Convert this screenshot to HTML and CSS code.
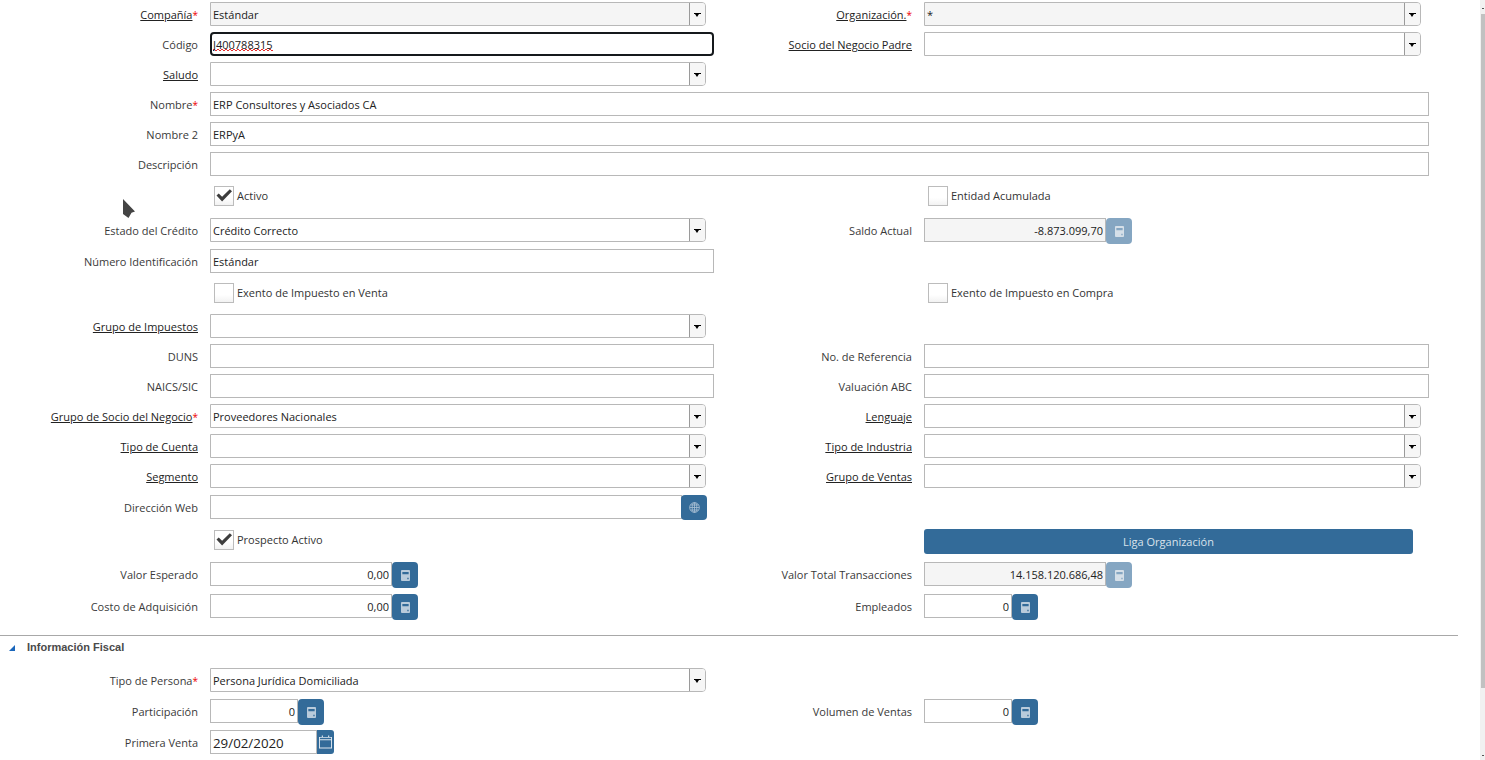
FILE: index.html
```html
<!DOCTYPE html>
<html lang="es">
<head>
<meta charset="utf-8">
<title>Socio del Negocio</title>
<link rel="stylesheet" href="styles.css">
</head>
<body>
<svg class="sprites" width="0" height="0">
  <symbol id="calc" viewBox="0 0 10 12"><path fill-rule="evenodd" d="M1 0h8a1 1 0 0 1 1 1v10a1 1 0 0 1-1 1H1a1 1 0 0 1-1-1V1a1 1 0 0 1 1-1zm.5 2v2.500h7V2zm5.500 6.500v1.700h1.500V8.500z"/></symbol>
  <symbol id="globe" viewBox="0 0 12 12"><g fill="none" stroke="currentColor" stroke-width=".9"><circle cx="6" cy="6" r="5.300"/><ellipse cx="6" cy="6" rx="2.500" ry="5.300"/><path d="M.7 6h10.600M1.500 3.300h9M1.500 8.700h9M6 .7v10.600"/></g></symbol>
  <symbol id="check" viewBox="0 0 20 20"><path d="M2.500 9.500l2.200-2.100 3.400 3.300L15.800 3.200l2.200 2.100-9.900 10.100z"/></symbol>
  <symbol id="cal" viewBox="0 0 14 14"><path fill-rule="evenodd" d="M3 0h1.200v1.500h5.600V0H11v1.500h3V14H0V1.500h3zM1 5v8h12V5zm0-2.500V4h12V2.500z"/></symbol>
</svg>
<div class="window">
<main class="form">
  <div class="row">
    <label class="lbl"><u>Compañía</u><b>*</b></label>
    <div class="combo ro"><input class="inp" value="Estándar" readonly><span class="arrow"></span></div>
    <label class="lbl"><u>Organización.</u><b>*</b></label>
    <div class="combo ro"><input class="inp" value="*" readonly><span class="arrow"></span></div>
  </div>
  <div class="row">
    <label class="lbl">Código</label>
    <input class="inp box focus" value="J400788315">
    <label class="lbl"><u>Socio del Negocio Padre</u></label>
    <div class="combo"><input class="inp"><span class="arrow"></span></div>
  </div>
  <div class="row">
    <label class="lbl"><u>Saludo</u></label>
    <div class="combo"><input class="inp"><span class="arrow"></span></div>
  </div>
  <div class="row">
    <label class="lbl">Nombre<b>*</b></label>
    <input class="inp box full" value="ERP Consultores y Asociados CA">
  </div>
  <div class="row">
    <label class="lbl">Nombre 2</label>
    <input class="inp box full" value="ERPyA">
  </div>
  <div class="row h33">
    <label class="lbl">Descripción</label>
    <input class="inp box full">
  </div>
  <div class="row h33">
    <span></span>
    <label class="chk"><span class="tick"><svg class="ico"><use href="#check"/></svg></span>Activo</label>
    <span></span>
    <label class="chk"><span class="tick"></span>Entidad Acumulada</label>
  </div>
  <div class="row h31">
    <label class="lbl">Estado del Crédito</label>
    <div class="combo"><input class="inp" value="Crédito Correcto"><span class="arrow"></span></div>
    <label class="lbl">Saldo Actual</label>
    <div class="num"><input class="inp box right ro" value="-8.873.099,70" readonly><button class="btn dim"><svg class="ico"><use href="#calc"/></svg></button></div>
  </div>
  <div class="row h33">
    <label class="lbl">Número Identificación</label>
    <input class="inp box" value="Estándar">
  </div>
  <div class="row h32">
    <span></span>
    <label class="chk"><span class="tick"></span>Exento de Impuesto en Venta</label>
    <span></span>
    <label class="chk"><span class="tick"></span>Exento de Impuesto en Compra</label>
  </div>
  <div class="row">
    <label class="lbl"><u>Grupo de Impuestos</u></label>
    <div class="combo"><input class="inp"><span class="arrow"></span></div>
  </div>
  <div class="row">
    <label class="lbl">DUNS</label>
    <input class="inp box">
    <label class="lbl">No. de Referencia</label>
    <input class="inp box">
  </div>
  <div class="row">
    <label class="lbl">NAICS/SIC</label>
    <input class="inp box">
    <label class="lbl">Valuación ABC</label>
    <input class="inp box">
  </div>
  <div class="row">
    <label class="lbl"><u>Grupo de Socio del Negocio</u><b>*</b></label>
    <div class="combo"><input class="inp" value="Proveedores Nacionales"><span class="arrow"></span></div>
    <label class="lbl"><u>Lenguaje</u></label>
    <div class="combo"><input class="inp"><span class="arrow"></span></div>
  </div>
  <div class="row">
    <label class="lbl"><u>Tipo de Cuenta</u></label>
    <div class="combo"><input class="inp"><span class="arrow"></span></div>
    <label class="lbl"><u>Tipo de Industria</u></label>
    <div class="combo"><input class="inp"><span class="arrow"></span></div>
  </div>
  <div class="row h31">
    <label class="lbl"><u>Segmento</u></label>
    <div class="combo"><input class="inp"><span class="arrow"></span></div>
    <label class="lbl"><u>Grupo de Ventas</u></label>
    <div class="combo"><input class="inp"><span class="arrow"></span></div>
  </div>
  <div class="row h34">
    <label class="lbl">Dirección Web</label>
    <div class="num web"><input class="inp box"><button class="btn"><svg class="ico globe"><use href="#globe"/></svg></button></div>
  </div>
  <div class="row h33">
    <span></span>
    <label class="chk"><span class="tick"><svg class="ico"><use href="#check"/></svg></span>Prospecto Activo</label>
    <span></span>
    <button class="liga">Liga Organización</button>
  </div>
  <div class="row h32">
    <label class="lbl">Valor Esperado</label>
    <div class="num"><input class="inp box right" value="0,00"><button class="btn"><svg class="ico"><use href="#calc"/></svg></button></div>
    <label class="lbl">Valor Total Transacciones</label>
    <div class="num"><input class="inp box right ro" value="14.158.120.686,48" readonly><button class="btn dim"><svg class="ico"><use href="#calc"/></svg></button></div>
  </div>
  <div class="row h41">
    <label class="lbl">Costo de Adquisición</label>
    <div class="num"><input class="inp box right" value="0,00"><button class="btn"><svg class="ico"><use href="#calc"/></svg></button></div>
    <label class="lbl">Empleados</label>
    <div class="num short"><input class="inp box right" value="0"><button class="btn"><svg class="ico"><use href="#calc"/></svg></button></div>
  </div>
  <section class="section">
    <h3 class="section-title"><span class="tri"></span>Información Fiscal</h3>
    <div class="row h31">
      <label class="lbl">Tipo de Persona<b>*</b></label>
      <div class="combo"><input class="inp" value="Persona Jurídica Domiciliada"><span class="arrow"></span></div>
    </div>
    <div class="row h31">
      <label class="lbl">Participación</label>
      <div class="num short"><input class="inp box right" value="0"><button class="btn"><svg class="ico"><use href="#calc"/></svg></button></div>
      <label class="lbl">Volumen de Ventas</label>
      <div class="num short"><input class="inp box right" value="0"><button class="btn"><svg class="ico"><use href="#calc"/></svg></button></div>
    </div>
    <div class="row">
      <label class="lbl">Primera Venta</label>
      <div class="date"><input class="inp box datev" value="29/02/2020"><button class="calbtn"><svg class="ico"><use href="#cal"/></svg></button></div>
    </div>
  </section>
</main>
<div class="scrollbar"><i class="up"></i><div class="thumb"></div><i class="down"></i></div>
</div>
<svg class="pointer" width="13" height="20" viewBox="0 0 13 20"><path d="M0 0l12 12.500-3.500 1.200-3 5.300L0 15z"/></svg>
</body>
</html>
```
FILE: styles.css
```css
* { box-sizing: border-box; }
html, body { margin: 0; height: 760px; overflow: hidden; background: #fff; }
body { font: 11px "Open Sans", "Noto Sans", sans-serif; color: #333; }
.sprites { position: absolute; }
.window { display: flex; height: 760px; }
.form { width: 1480px; padding-top: 2px; }
.row { display: grid; grid-template-columns: 198px 504px 186px 505px; column-gap: 12px; height: 30px; align-items: start; }
.h31 { height: 31px; }
.h32 { height: 32px; }
.h33 { height: 33px; }
.h34 { height: 34px; }
.h41 { height: 41px; }
.lbl { height: 24px; line-height: 26px; text-align: right; white-space: nowrap; color: #3a3a3a; }
.lbl u { color: #222; }
.lbl b { color: #ee0000; font-weight: 400; font-size: 10px; }
.inp { font: inherit; color: #222; height: 24px; border: 0; padding: 1px 2px 0 2px; background: transparent; width: 100%; min-width: 0; outline: 0; display: block; }
.box { border: 1px solid #b8b8b8; background: #fff; }
.ro { background: #f5f5f5; }
.focus { border: 2px solid #15191c; border-radius: 4px; padding-left: 1px;
  background:
    repeating-linear-gradient(90deg, #e83030 0 2px, transparent 2px 4px) no-repeat 1px 15px / 60px 1px,
    repeating-linear-gradient(90deg, transparent 0 2px, #e83030 2px 4px) no-repeat 1px 16px / 60px 1px,
    #fff; }
.full { grid-column: 2 / 5; }
.right { text-align: right; }
.combo { display: flex; width: 496px; height: 24px; border: 1px solid #b8b8b8; border-radius: 0 4px 4px 0; }
.row > .combo:nth-child(4) { width: 497px; }
.combo .inp { height: 22px; flex: 1; padding-left: 2px; }
.arrow { width: 16px; border-left: 1px solid #9a9a9a; background: #f6f6f6 linear-gradient(#000, #000) no-repeat 4px 10px / 7px 1px; border-radius: 0 3px 3px 0; position: relative; }
.arrow::after { content: ""; position: absolute; left: 5px; top: 11px; border: 2.500px solid transparent; border-top: 3px solid #000; border-bottom: 0; }
.num { display: flex; width: 208px; }
.num .inp { flex: 1; }
.num.short { width: 114px; }
.num.web { width: 497px; }
.btn { width: 26px; height: 26px; flex: none; margin: 0; padding: 0; border: 0; border-radius: 4px; background: #336b99; color: #b9cbdb; display: flex; align-items: center; justify-content: center; }
.btn.dim { background: #85a6c2; }
.btn.dim .ico { fill: #d5dfe8; }
.web .btn { margin-left: -1px; height: 25px; }
.ico { width: 9px; height: 11px; fill: currentColor; display: block; }
.globe { width: 11px; height: 11px; color: #a9c0d4; }
.chk { display: flex; align-items: center; height: 21px; margin-left: 4px; gap: 3px; white-space: nowrap; line-height: 22px; color: #333; }
.tick { width: 20px; height: 20px; border: 1px solid #bcbcbc; background: linear-gradient(#fff 60%, #f2f2f2); flex: none; }
.tick .ico { width: 20px; height: 20px; margin: -1px; fill: #3d3d3d; }
.liga { width: 489px; height: 25px; border: 0; border-radius: 3px; background: #336b99; color: #d9e3ec; font: inherit; padding: 0; }
.section { border-top: 1px solid #a8a8a8; width: 1458px; }
.section-title { margin: 0; display: flex; align-items: center; height: 32px; padding-bottom: 10px; font: 700 11px "Liberation Sans", Arial, sans-serif; color: #4a4a4a; padding-left: 9px; }
.tri { width: 0; height: 0; border-style: solid; border-width: 0 0 6px 6px; border-color: transparent transparent #1a66bb transparent; margin-right: 12px; margin-top: 2px; }
.date { display: flex; width: 124px; height: 24px; }
.datev { flex: 1; font-size: 13.330px; padding-left: 2px; }
.calbtn { width: 17px; height: 24px; flex: none; padding: 0 0 0 2px; border: 0; border-radius: 0 3px 3px 0; background: #336b99; color: #dfe8f0; }
.calbtn .ico { width: 13px; height: 14px; }
.scrollbar { width: 5px; height: 760px; background: #f1f1f1; position: relative; }
.thumb { margin: 14px 0 0 1px; width: 4px; height: 674px; background: #c1c1c1; }
.up, .down { position: absolute; left: 2px; width: 2px; height: 1px; background: #555; }
.up { top: 8px; }
.down { bottom: 4px; }
.pointer { position: absolute; left: 123px; top: 199px; fill: #444; }
```
